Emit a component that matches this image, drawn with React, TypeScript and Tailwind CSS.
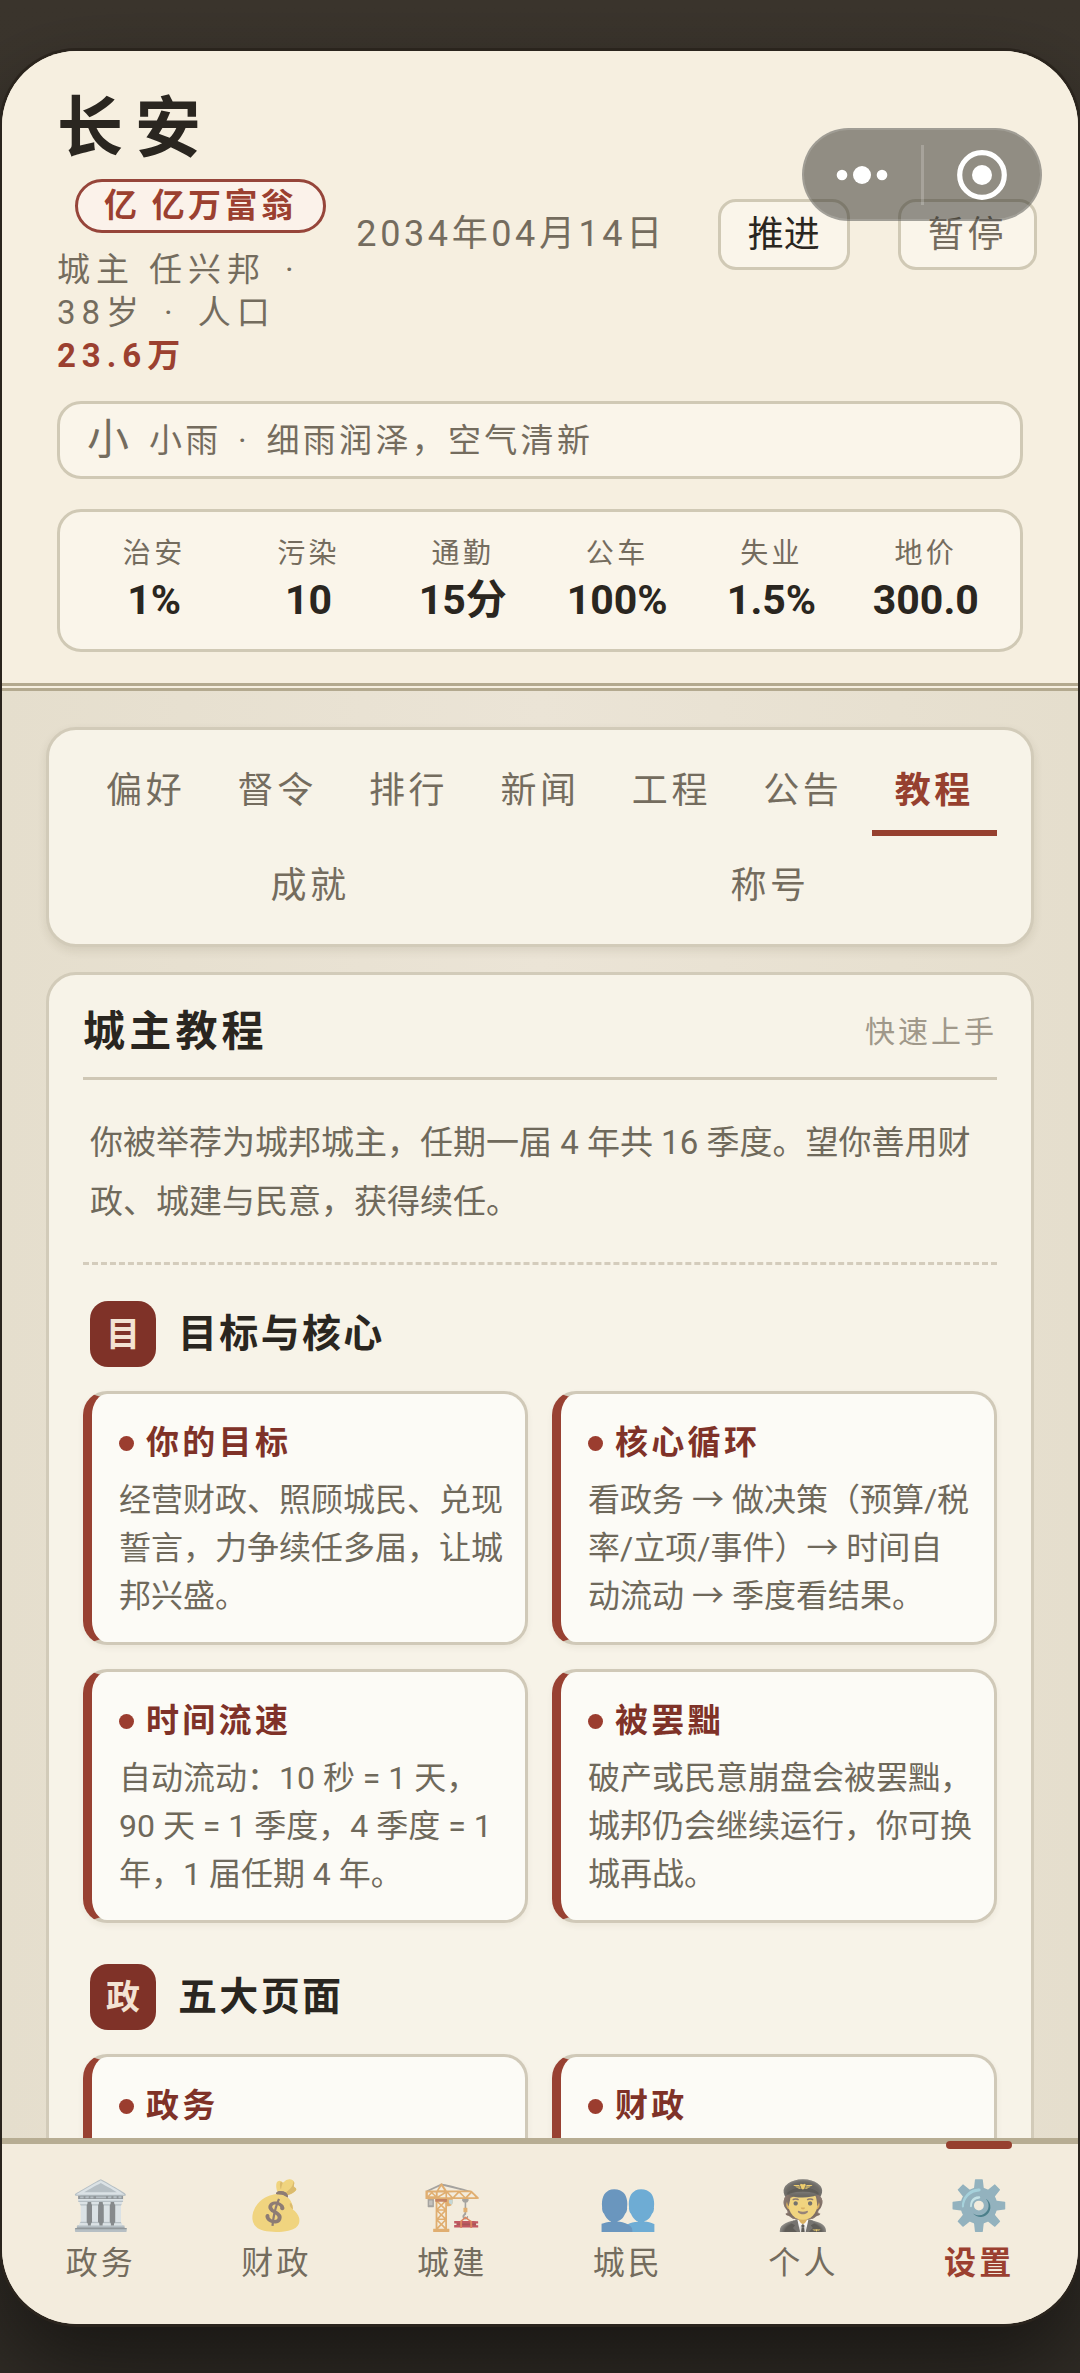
import { useState } from "react";
import clsx from "clsx";

interface Tip {
  title: string;
  body?: string;
}

interface Section {
  mark: string;
  title: string;
  tips: Tip[];
}

const stats = [
  { label: "治安", value: "1%" },
  { label: "污染", value: "10" },
  { label: "通勤", value: "15分" },
  { label: "公车", value: "100%" },
  { label: "失业", value: "1.5%" },
  { label: "地价", value: "300.0" },
];

const tabs = ["偏好", "督令", "排行", "新闻", "工程", "公告", "教程", "成就", "称号"];

const sections: Section[] = [
  {
    mark: "目",
    title: "目标与核心",
    tips: [
      { title: "你的目标", body: "经营财政、照顾城民、兑现誓言，力争续任多届，让城邦兴盛。" },
      { title: "核心循环", body: "看政务 → 做决策（预算/税率/立项/事件）→ 时间自动流动 → 季度看结果。" },
      { title: "时间流速", body: "自动流动：10 秒 = 1 天，90 天 = 1 季度，4 季度 = 1 年，1 届任期 4 年。" },
      { title: "被罢黜", body: "破产或民意崩盘会被罢黜，城邦仍会继续运行，你可换城再战。" },
    ],
  },
  {
    mark: "政",
    title: "五大页面",
    tips: [{ title: "政务" }, { title: "财政" }],
  },
];

const navItems = [
  { label: "政务", icon: "🏛️" },
  { label: "财政", icon: "💰" },
  { label: "城建", icon: "🏗️" },
  { label: "城民", icon: "👥" },
  { label: "个人", icon: "🧑‍✈️" },
  { label: "设置", icon: "⚙️" },
];

function Capsule() {
  return (
    <div className="absolute top-[77px] right-[36px] z-10 flex h-[93px] w-60 items-center rounded-full border-2 border-white/15 bg-[#2b2b26]/50">
      <button type="button" aria-label="更多" className="flex flex-1 justify-center">
        <svg width="52" height="20" viewBox="0 0 52 20" fill="#fff">
          <circle cx="6" cy="10" r="5.3" />
          <circle cx="26" cy="10" r="9" />
          <circle cx="46" cy="10" r="5.3" />
        </svg>
      </button>
      <span className="h-[60px] w-[3px] bg-white/20" />
      <button type="button" aria-label="关闭" className="flex flex-1 justify-center">
        <svg width="50" height="50" viewBox="0 0 50 50">
          <circle cx="25" cy="25" r="22.3" fill="none" stroke="#fff" strokeWidth="5.2" />
          <circle cx="25" cy="25" r="10" fill="#fff" />
        </svg>
      </button>
    </div>
  );
}

function Dot() {
  return <span className="px-[5px]">·</span>;
}

function TipCard({ title, body }: Tip) {
  return (
    <div className="rounded-3xl border-[3px] border-l-[9px] border-[#d0c9b8] border-l-[#984132] bg-[#fcfbf6] pt-[26px] pr-5 pb-[22px] pl-[27px] shadow-[0_3px_6px_rgba(60,45,20,0.06)]">
      <h4 className="mb-[10px] flex items-center gap-3 text-[33px] leading-[46px] font-bold tracking-[0.1em] text-[#7f3228]">
        <span className="size-[15px] rounded-full bg-[#9b3d2f]" />
        {title}
      </h4>
      {body && <p className="text-[32px] leading-[48px] text-[#6f695b]">{body}</p>}
    </div>
  );
}

export default function App() {
  const [tab, setTab] = useState("教程");
  const [page, setPage] = useState("设置");

  return (
    <div className="flex h-screen flex-col overflow-hidden bg-linear-to-b from-[#3b352d] to-[#302c26] px-[2px] pt-[51px] pb-[49px] font-[Roboto,'Noto_Sans_CJK_SC',sans-serif] text-[#2a2620]">
      <div className="relative flex min-h-0 flex-1 flex-col overflow-hidden rounded-[75px] bg-[#e8e1d2] shadow-[0_0_0_3px_#2a241d,0_40px_90px_rgba(0,0,0,0.5)]">
        <Capsule />

        {/* City header */}
        <header className="border-b-8 border-double border-[#b3a98f] bg-[#f6efe0] px-[55px] pt-10 pb-[31px]">
          <div className="-mr-[14px] flex items-center gap-[30px]">
            <div className="min-w-0 flex-1">
              <h1 className="text-[66px] leading-[76px] font-bold tracking-[0.18em]">长安</h1>
              <div className="mt-3 mb-[15px] ml-[18px] w-fit rounded-full border-[3px] border-[#96453a] bg-[#fbf2ea] px-[26px] text-[33px] leading-[48px] font-bold tracking-[0.1em] whitespace-nowrap text-[#9b4030]">
                亿 亿万富翁
              </div>
              <p className="text-[33px] leading-[43px] tracking-[0.18em] text-[#746c5e]">
                城主 任兴邦 <Dot /> 38岁 <Dot /> 人口 <strong className="font-bold text-[#9b4030]">23.6万</strong>
              </p>
            </div>
            <div className="flex shrink-0 items-center gap-12 text-[36px] leading-[51px] whitespace-nowrap">
              <time className="mr-1 tracking-[0.1em] text-[#746c5e]">2034年04月14日</time>
              <button type="button" className="rounded-[18px] border-[3px] border-[#d0c9b5] bg-[#faf5ea] px-[27px] pt-2 pb-[6px]">
                推进
              </button>
              <button
                type="button"
                className="rounded-[18px] border-[3px] border-[#d0c9b5] bg-[#faf5ea] px-[27px] pt-2 pb-[6px] tracking-[0.1em] text-[#746c5e]"
              >
                暂停
              </button>
            </div>
          </div>

          <div className="mt-6 flex h-[78px] items-center gap-5 rounded-3xl border-[3px] border-[#d0c9b5] bg-[#faf5ea] px-[27px] text-[#746c5e]">
            <span className="text-[42px] leading-none">小</span>
            <span className="text-[33px] leading-none tracking-[0.1em]">
              小雨 <Dot /> 细雨润泽，空气清新
            </span>
          </div>

          <dl className="mt-[30px] grid grid-cols-6 rounded-3xl border-[3px] border-[#d0c9b5] bg-[#faf5ea] px-[17px] pt-[22px] pb-[23px] text-center">
            {stats.map((s) => (
              <div key={s.label}>
                <dt className="text-[28px] leading-[40px] tracking-[0.12em] text-[#746c5e]">{s.label}</dt>
                <dd className="text-[41px] leading-[52px] font-bold">{s.value}</dd>
              </div>
            ))}
          </dl>
        </header>

        <main className="flex min-h-0 flex-1 flex-col gap-[25px] overflow-hidden bg-linear-to-r from-[#e5decd] via-[#ebe4d6] to-[#e5decd] px-[44px] pt-9">
          <nav className="flex shrink-0 flex-wrap gap-[6px] rounded-[30px] border-[3px] border-[#d2cbb9] bg-[#f7f3e8] px-[34px] pt-[17px] pb-[13px] shadow-[0_4px_10px_rgba(60,45,20,0.1)]">
            {tabs.map((t) => (
              <button
                key={t}
                type="button"
                onClick={() => setTab(t)}
                className={clsx(
                  "grow basis-[110px] border-b-[6px] pt-[18px] pb-3 text-[36px] leading-[53px] tracking-[0.1em]",
                  t === tab ? "border-[#96402f] font-bold text-[#96402f]" : "border-transparent text-[#746c5e]"
                )}
              >
                {t}
              </button>
            ))}
          </nav>

          {/* Tutorial */}
          <article className="shrink-0 rounded-[30px] border-[3px] border-[#d2cbb9] bg-[#f7f3e8] px-[34px] pt-7 pb-9">
            <div className="flex items-center justify-between border-b-[3px] border-[#cfc7b5] pb-4">
              <h2 className="text-[42px] leading-[58px] font-bold tracking-[0.1em]">城主教程</h2>
              <span className="text-[30px] leading-[48px] tracking-[0.1em] text-[#a0988a]">快速上手</span>
            </div>
            <p className="border-b-[3px] border-dashed border-[#d4ccbc] px-[7px] pt-[33px] pb-[31px] text-[33px] leading-[59px] text-[#6f695b]">
              你被举荐为城邦城主，任期一届 4 年共 16 季度。望你善用财政、城建与民意，获得续任。
            </p>

            <div className="flex flex-col gap-[41px] pt-9">
              {sections.map((s) => (
                <section key={s.title}>
                  <div className="mb-6 flex items-center gap-[22px] pl-[7px]">
                    <span className="flex size-[66px] items-center justify-center rounded-[18px] bg-[#7f3228] text-[34px] font-bold text-[#f3e3d3]">
                      {s.mark}
                    </span>
                    <h3 className="text-[39px] leading-[54px] font-bold tracking-[0.06em]">{s.title}</h3>
                  </div>
                  <div className="grid grid-cols-2 gap-6">
                    {s.tips.map((tip) => (
                      <TipCard key={tip.title} {...tip} />
                    ))}
                  </div>
                </section>
              ))}
            </div>
          </article>
        </main>

        <nav className="grid grid-cols-6 border-t-[6px] border-[#b7ad93] bg-[#f3ecdd] px-[11px] pt-[26px] pb-10">
          {navItems.map((n) => {
            const active = n.label === page;
            return (
              <button
                key={n.label}
                type="button"
                onClick={() => setPage(n.label)}
                className="relative flex flex-col items-center"
              >
                {active && <span className="absolute -top-[29px] h-2 w-[66px] rounded-full bg-[#96402f]" />}
                <span
                  className={clsx(
                    "font-['Noto_Color_Emoji',sans-serif] text-[48px] leading-[72px]",
                    active ? "opacity-90 grayscale-[20%]" : "opacity-70 grayscale-[30%]"
                  )}
                >
                  {n.icon}
                </span>
                <span
                  className={clsx(
                    "text-[32px] leading-[42px] tracking-[0.1em]",
                    active ? "font-bold text-[#9b4030]" : "text-[#746c5e]"
                  )}
                >
                  {n.label}
                </span>
              </button>
            );
          })}
        </nav>
      </div>
    </div>
  );
}
